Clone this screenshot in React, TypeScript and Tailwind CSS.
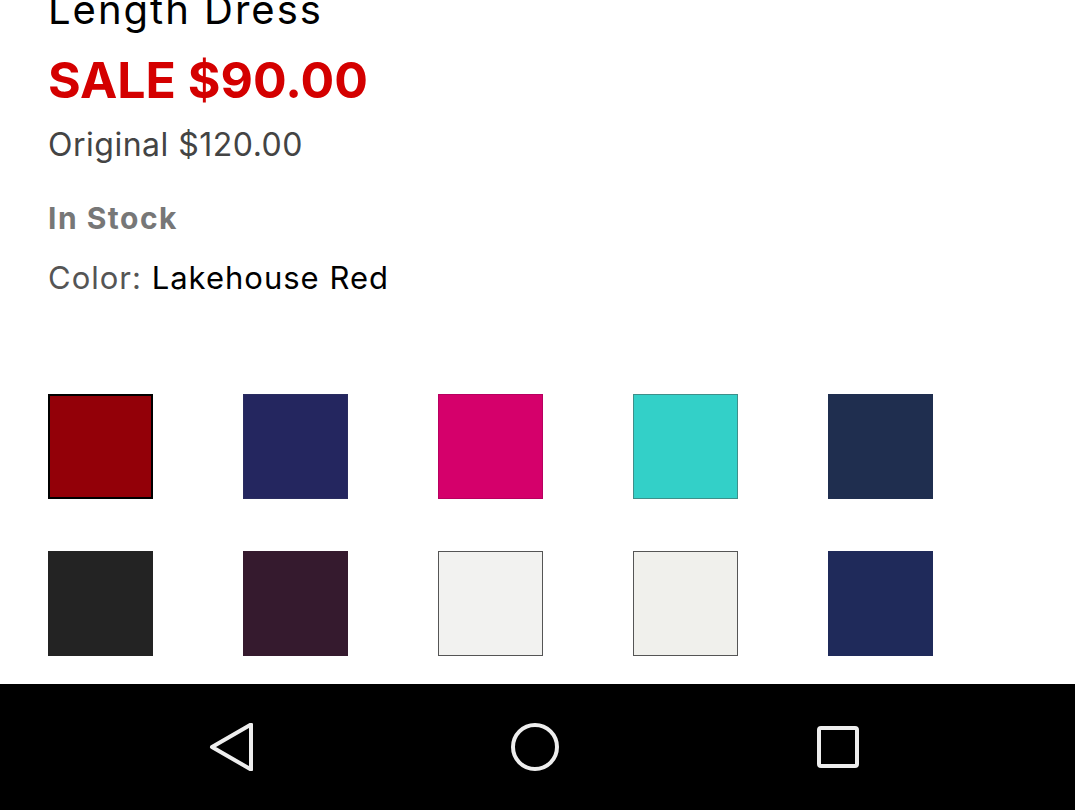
const swatches = [
  { color: "bg-[#930008]", border: "border-2 border-black" },
  { color: "bg-[#24265f]", border: "border border-[#2a2c60]" },
  { color: "bg-[#d5006b]", border: "border border-[#b80060]" },
  { color: "bg-[#33d0c8]", border: "border border-[#3f8f8a]" },
  { color: "bg-[#1f2e4f]", border: "border border-[#1f2e4f]" },
  { color: "bg-[#232323]", border: "border border-[#232323]" },
  { color: "bg-[#351a2e]", border: "border border-[#351a2e]" },
  { color: "bg-[#f2f2f0]", border: "border border-[#555555]" },
  { color: "bg-[#f0f0ec]", border: "border border-[#555555]" },
  { color: "bg-[#1f2a5a]", border: "border border-[#1f2a5a]" },
];

function NavBar() {
  return (
    <div className="flex h-[126px] shrink-0 items-center gap-[255px] bg-black pl-[208px]">
      <svg width="48" height="48" viewBox="0 0 48 48" fill="none" stroke="#eeeeee" strokeWidth="4" strokeLinejoin="round">
        <path d="M4 24 L43 1.5 L43 46.5 Z" />
      </svg>
      <svg width="48" height="48" viewBox="0 0 48 48" fill="none" stroke="#eeeeee" strokeWidth="4">
        <circle cx="24" cy="24" r="22" />
      </svg>
      <svg width="48" height="48" viewBox="0 0 48 48" fill="none" stroke="#eeeeee" strokeWidth="4">
        <rect x="5" y="5" width="38" height="38" rx="2" />
      </svg>
    </div>
  );
}

export default function App() {
  return (
    <div className="flex h-[810px] w-[1075px] flex-col overflow-hidden bg-white font-['Inter',sans-serif]">
      <div className="flex-1 overflow-hidden pl-[48px]">
        <div className="mt-[-10px] text-[40px] leading-none tracking-[2px] text-black">Length Dress</div>
        <div className="mt-[25px] text-[50px] font-bold leading-none text-[#d40000]">SALE $90.00</div>
        <div className="mt-[24px] text-[32px] leading-none tracking-[0.5px] text-[#444444]">Original $120.00</div>
        <div className="mt-[42px] text-[30px] font-bold leading-none tracking-[1.5px] text-[#777777]">In Stock</div>
        <div className="mt-[29px] text-[31px] leading-none tracking-[1px] text-[#555555]">
          Color: <span className="text-black">Lakehouse Red</span>
        </div>
        <div className="mt-[101px] grid w-[885px] grid-cols-5 gap-x-[90px] gap-y-[52px]">
          {swatches.map((s, i) => (
            <div key={i} className={`h-[105px] w-[105px] ${s.color} ${s.border}`} />
          ))}
        </div>
      </div>
      <NavBar />
    </div>
  );
}
